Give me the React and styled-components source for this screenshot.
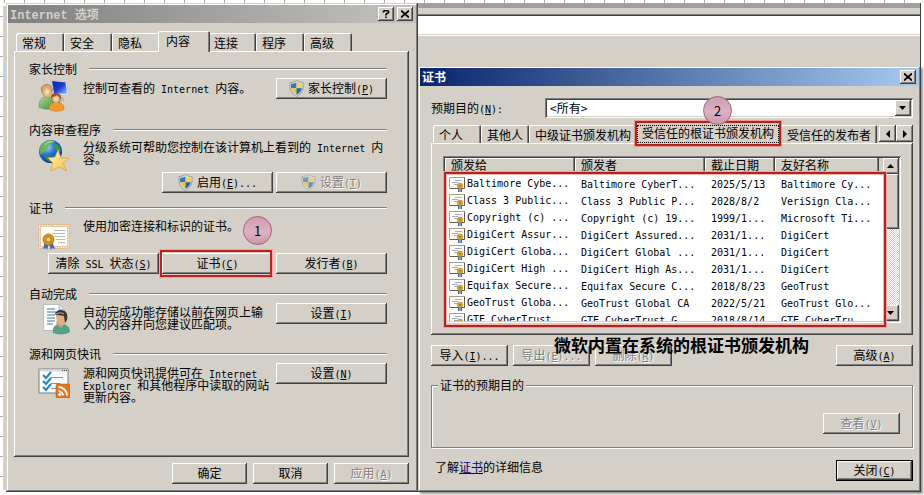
import React from 'react';
import styled, { createGlobalStyle, css } from 'styled-components';

const face = '#d4d0c8';
const shade = '#808080';
const dark = '#404040';
const red = '#b8201c';

const GlobalStyle = createGlobalStyle`
  *, *::before, *::after { box-sizing: border-box; }
  body {
    margin: 0;
    background: #fff;
    color: #000;
    font: 12px/12px "Noto Sans CJK SC", sans-serif;
  }
  button, select { font: inherit; color: inherit; }
  p, h1, h2 { margin: 0; font-size: 12px; font-weight: 400; }
`;

const raised = css`
  background: ${face};
  box-shadow: inset -1px -1px ${dark}, inset 1px 1px #fff, inset -2px -2px ${shade};
`;

const Mono = styled.span`
  font-family: "DejaVu Sans Mono", monospace;
  font-size: 10px;
  line-height: 8px;
  white-space: pre-wrap;
`;

/* Latin runs use a half-width face; a letter in brackets is an access key. */
function Label({ children }) {
  return children.split(/([\x20-\x7e]+)/).filter(Boolean).map((run, i) => {
    if (!/^[\x20-\x7e]/.test(run)) return run;
    const key = run.match(/^(.*\()([A-Z])(\).*)$/);
    return <Mono key={i}>{key ? <>{key[1]}<u>{key[2]}</u>{key[3]}</> : run}</Mono>;
  });
}

const Desktop = styled.main`
  display: grid;
  grid-template-columns: 412fr 503fr;
  padding: 3px 3px 3px 6px;
  background:
    linear-gradient(#bcd4ea, #bcd4ea) 3px 66px / 3px 18px no-repeat,
    linear-gradient(${face}, ${face}) 3px 6px / 3px 484px no-repeat,
    repeating-linear-gradient(90deg, transparent 0 4px, #aaa 4px 5px, transparent 5px 20px) 0 0 / 100% 3px no-repeat,
    repeating-linear-gradient(transparent 0 16px, #aaa 16px 17px, transparent 17px 20px) 0 0 / 3px 100% no-repeat,
    #fff;
`;

const Dialog = styled.section`
  display: flex;
  flex-direction: column;
  flex: 1;
  min-width: 0;
  padding: 2px;
  background: ${face};
  box-shadow: inset -1px -1px ${dark}, inset 1px 1px ${face}, inset -2px -2px ${shade}, inset 2px 2px #fff;
`;

const FrontDialog = styled(Dialog)`
  box-shadow: inset -1px -1px ${dark}, inset 1px 1px ${face}, inset -2px -2px ${shade}, inset 2px 2px #fff, 2px 2px 2px #999;
`;

const TitleBar = styled.header`
  display: flex;
  align-items: center;
  gap: 3px;
  height: 18px;
  padding: 0 3px 0 2px;
  color: ${p => (p.$active ? '#fff' : face)};
  background: ${p => (p.$active
    ? 'linear-gradient(90deg, #0a246a, #a6caf0)'
    : 'linear-gradient(90deg, #808080, #c4c2be)')};
  h1 { flex: 1; font-weight: 700; font-size: 12px; }
  h1 ${Mono} { font-family: "Liberation Mono", monospace; font-size: 12px; }
`;

const CaptionButton = styled.button`
  ${raised}
  display: grid;
  place-items: center;
  width: 16px;
  height: 14px;
  padding: 0;
  border: 0;
  svg { width: 8px; height: 8px; }
`;

const Tabs = styled.nav`
  display: flex;
  align-items: flex-end;
  height: 20px;
  padding-left: 2px;
  overflow: visible;
`;

const Tab = styled.button`
  height: ${p => (p.$active ? 21 : 18)}px;
  min-width: ${p => (p.$active ? 52 : 48)}px;
  margin: ${p => (p.$active ? '0 -2px -1px -2px' : '0')};
  padding: ${p => (p.$active ? '0 8px 2px' : '2px 6px 0')};
  text-align: left;
  white-space: nowrap;
  border: 0;
  border-radius: 2px 2px 0 0;
  background: ${face};
  box-shadow: inset 1px 1px #fff, inset -1px 0 ${dark}, inset -2px 0 ${shade};
  position: relative;
  z-index: ${p => (p.$active ? 1 : 0)};
  ${p => p.$marked && css`
    padding: 0 7px 2px;
    box-shadow: none;
    height: 22px;
    margin-right: 0;
    margin-bottom: -2px;
    outline: 1px dotted #000;
    outline-offset: -3px;
    &::after {
      content: '';
      position: absolute;
      inset: -2px 0 -1px;
      border: 2px solid ${red};
      box-shadow: 0 0 0 1px #e89a94;
    }
  `}
`;

const Panel = styled.div`
  padding: ${p => p.$pad};
  background: ${face};
  box-shadow: inset -1px -1px ${dark}, inset 1px 1px #fff, inset -2px -2px ${shade};
`;

const PushButton = styled.button`
  ${raised}
  display: inline-flex;
  align-items: center;
  justify-content: center;
  gap: 4px;
  flex: none;
  width: ${p => p.$w || 111}px;
  height: 21px;
  padding: 0 0 1px;
  border: 0;
  white-space: nowrap;
  position: relative;
  ${p => p.$default && css`
    border: 1px solid #000;
  `}
  &:disabled { color: ${shade}; text-shadow: 1px 1px #fff; }
  &:disabled svg { opacity: 0.6; }
  ${p => p.$marked && css`
    &::after {
      content: '';
      position: absolute;
      inset: -3px 1px -3px -2px;
      border: 2px solid #cc1a1a;
      box-shadow: 0 0 0 1px #eba8a0;
    }
  `}
`;

const InternetBody = styled.div`
  display: flex;
  flex-direction: column;
  flex: 1;
  padding: 8px 7px 6px 6px;
`;

const Section = styled.section`
  min-height: ${p => p.$h}px;
`;

const SectionTitle = styled.h2`
  display: flex;
  align-items: center;
  gap: 12px;
  height: 17px;
  padding-bottom: 2px;
  &::after {
    content: '';
    flex: 1;
    height: 2px;
    background: linear-gradient(${shade} 50%, #fff 50%);
  }
`;

const SectionBody = styled.div`
  display: grid;
  grid-template-columns: 32px ${p => (p.$wide ? '1fr' : '1fr 111px')};
  column-gap: 13px;
  padding-left: 9px;
  svg { display: block; }
`;

const Description = styled.p`
  padding-top: ${p => p.$top}px;
  margin-right: -10px;
`;

const ButtonRow = styled.div`
  display: flex;
  justify-content: flex-end;
  gap: ${p => p.$gap || 3}px;
  margin-top: ${p => p.$top}px;
`;

const RightSide = styled.div`
  display: flex;
  flex-direction: column;
  min-width: 0;
`;

const BackWindow = styled.div`
  height: 63px;
  background: linear-gradient(
    #a0a0a0 0 5px, ${face} 5px 11px, ${shade} 11px 12px, ${dark} 12px 13px,
    #fff 13px 31px, ${face} 31px 32px, #fff 32px 33px, ${face} 33px);
  border-right: 1px solid ${dark};
`;

const CertBody = styled.div`
  padding: 12px 6px 8px 11px;
`;

const PurposeRow = styled.div`
  display: grid;
  grid-template-columns: 114px 1fr;
  align-items: center;
`;

const SelectBox = styled.div`
  display: flex;
  height: 20px;
  padding: 2px;
  background: #fff;
  box-shadow: inset 1px 1px ${shade}, inset -1px -1px #fff, inset 2px 2px ${dark}, inset -2px -2px ${face};
  position: relative;
  select {
    flex: 1;
    appearance: none;
    border: 0;
    padding: 0 18px 0 3px;
    background: transparent;
    outline: 0;
  }
`;

const SelectArrow = styled.span`
  ${raised}
  position: absolute;
  right: 2px;
  top: 2px;
  display: grid;
  place-items: center;
  width: 16px;
  height: 16px;
  pointer-events: none;
`;

const CertTabs = styled.div`
  display: flex;
  justify-content: space-between;
  margin-top: 5px;
`;

const TabScroller = styled.div`
  display: flex;
  padding-top: 2px;
`;

const ArrowButton = styled.button`
  ${raised}
  display: grid;
  place-items: center;
  width: ${p => p.$w || 16}px;
  height: ${p => p.$h || 16}px;
  padding: 0;
  border: 0;
`;

const ListBox = styled.div`
  display: grid;
  grid-template-columns: 1fr 16px;
  height: 167px;
  padding: 2px;
  background: #fff;
  box-shadow: inset 1px 1px ${shade}, inset -1px -1px #fff, inset 2px 2px ${dark}, inset -2px -2px ${face};
  position: relative;
  &::after {
    content: '';
    position: absolute;
    inset: 16px 15px -4px 1px;
    border: 2px solid ${red};
    box-shadow: 0 0 0 1px #e6aaa4, inset 0 0 0 1px #f0b8b2;
    pointer-events: none;
  }
`;

const TableClip = styled.div`
  overflow: hidden;
  background: linear-gradient(${face} 16px, #fff 16px);
`;

const CertTable = styled.table`
  width: 434px;
  table-layout: fixed;
  border-collapse: collapse;
  th {
    height: 17px;
    padding: 0 6px 3px;
    text-align: left;
    font-weight: 400;
    background: ${face};
    box-shadow: inset -1px 0 ${dark}, inset -2px 0 ${shade}, inset 1px 1px #fff;
  }
  td {
    height: 17px;
    padding: 0 6px 1px;
    white-space: nowrap;
  }
  td:first-child { padding: 0 0 0 4px; }
`;

const Issued = styled.div`
  display: flex;
  align-items: center;
  gap: 2px;
`;

const ScrollBar = styled.div`
  display: flex;
  flex-direction: column;
  background: repeating-conic-gradient(#fff 0 25%, ${face} 0 50%) 0 0 / 2px 2px;
`;

const Thumb = styled.div`
  ${raised}
  height: 55px;
  margin-bottom: auto;
`;

const CertActions = styled.div`
  display: flex;
  gap: 5px;
  margin-top: 10px;
  position: relative;
  > button:last-of-type { margin-left: auto; }
`;

const Caption = styled.strong`
  position: absolute;
  left: 123px;
  top: -10px;
  font-size: 17px;
  line-height: 20px;
  white-space: nowrap;
`;

const PurposeGroup = styled.fieldset`
  display: flex;
  justify-content: flex-end;
  margin: 13px 0 0;
  padding: 22px 12px 13px;
  border: 1px solid ${shade};
  box-shadow: inset 1px 1px #fff, 1px 1px #fff;
  legend {
    margin-left: -6px;
    padding: 0 2px;
    background: ${face};
  }
`;

const CertFooter = styled.footer`
  display: flex;
  justify-content: space-between;
  margin-top: 12px;
  padding-left: 4px;
  p { padding-top: 1px; }
  a { color: #00007f; }
`;

const Badge = styled.span`
  position: absolute;
  left: ${p => p.$x}px;
  top: ${p => p.$y}px;
  z-index: 3;
  display: grid;
  place-items: center;
  width: 29px;
  height: 29px;
  border: 1px solid #9c6478;
  border-radius: 50%;
  background: linear-gradient(#cf9cb0, #dcb2c2 55%, #cb98aa);
  font: 13px/13px "Noto Sans CJK SC", sans-serif;
`;

const Anchor = styled.div`
  position: relative;
`;

const Arrow = ({ dir }) => {
  const d = { up: 'M0 6h7L3.500 2z', down: 'M0 2h7L3.500 6z', left: 'M6 0v8L2 4z', right: 'M2 0v8l4-4z' }[dir];
  return <svg width="8" height="8" viewBox="0 0 8 8" aria-hidden="true"><path d={d} /></svg>;
};

const Cross = () => (
  <svg viewBox="0 0 8 8" aria-hidden="true"><path d="M0 .5l8 7M8 .5l-8 7" stroke="#000" strokeWidth="1.700" /></svg>
);

const Question = () => (
  <svg viewBox="0 0 8 8" aria-hidden="true">
    <path d="M1.500 2.500V1.500L2.500.7h3l1 .8v1L4 4.300v1.200M4 6.600V8" fill="none" stroke="#000" strokeWidth="1.600" />
  </svg>
);

const Shield = () => (
  <svg width="15" height="17" viewBox="0 0 15 17" aria-hidden="true">
    <path d="M7.500.5c2 1.500 4 2 6.500 2 .6 6-.8 11-6.500 14C1.800 13.500.4 8.500 1 2.500c2.500 0 4.500-.5 6.500-2z" fill="#dde3e6" stroke="#8f9aa0" />
    <path d="M7.500 2.200v6H2.200c-.3-1.500-.3-3-.1-4.500 2 0 3.700-.5 5.400-1.500z" fill="#2f78bd" />
    <path d="M7.500 2.200c1.700 1 3.400 1.500 5.400 1.500.2 1.500.2 3-.1 4.500H7.500z" fill="#f1d44b" />
    <path d="M7.500 8.200v6.700C4.500 13.300 2.800 11 2.200 8.200z" fill="#efc938" />
    <path d="M7.500 8.200h5.300c-.6 2.800-2.300 5.100-5.300 6.700z" fill="#2566ac" />
  </svg>
);

const FamilyIcon = () => (
  <svg width="32" height="34" viewBox="0 0 32 34" aria-hidden="true">
    <defs>
      <linearGradient id="screen" x2="1" y2="1"><stop stopColor="#0826b0" /><stop offset=".5" stopColor="#1736d4" /><stop offset="1" stopColor="#9cc4ff" /></linearGradient>
      <linearGradient id="green" x2="1" y2="1"><stop stopColor="#a8d890" /><stop offset="1" stopColor="#3c8b3c" /></linearGradient>
      <radialGradient id="skin"><stop stopColor="#ffe8c4" /><stop offset="1" stopColor="#d9a066" /></radialGradient>
    </defs>
    <path d="M13 2l16 2 2 14-16-1z" fill="#dfe2e6" stroke="#a9adb2" strokeWidth=".5" />
    <path d="M14 3l13.500 1.500L29 16l-13-1z" fill="url(#screen)" />
    <path d="M20 18l6 1v4l-6 1z" fill="#b8bcc0" />
    <path d="M1 29c0-7 2-10 8-10s9 4 9 10c-4 3-13 3-17 0z" fill="url(#green)" stroke="#4d8a45" strokeWidth=".5" />
    <path d="M3 13c-1-5 3-7 6-7s7 3 5 9l-3 4H6z" fill="#b98d4c" />
    <ellipse cx="9" cy="14" rx="4.500" ry="5.500" fill="url(#skin)" />
    <path d="M4 12c2-1 3-2 4-3 2 2 4 2 6 2-1-4-9-6-10 1z" fill="#d3ac6b" />
    <path d="M11 31c0-5 2-7 7-7s8 2 8 7c-3 3-12 3-15 0z" fill="#f0982c" stroke="#bd701b" strokeWidth=".5" />
    <path d="M13 19c0-5 10-6 10 1l-2 5h-6z" fill="#8a4e22" />
    <ellipse cx="18" cy="21" rx="4" ry="4.300" fill="url(#skin)" />
    <path d="M14 19c2 0 4-1 5-2 1 1 2 2 4 2-1-5-8-5-9 0z" fill="#9c5b2a" />
  </svg>
);

const GlobeIcon = () => (
  <svg width="32" height="33" viewBox="0 0 32 33" aria-hidden="true">
    <defs>
      <radialGradient id="sea" cx=".35" cy=".3" r=".8"><stop stopColor="#a9dcff" /><stop offset=".4" stopColor="#2a78d0" /><stop offset="1" stopColor="#082a72" /></radialGradient>
      <linearGradient id="gold" x2="1" y2="1"><stop stopColor="#fff7b8" /><stop offset="1" stopColor="#f6bd4a" /></linearGradient>
    </defs>
    <circle cx="12.500" cy="12.500" r="11.500" fill="url(#sea)" />
    <path d="M4 5c3-3 6-4 9-4l2 3-4 2-1 4-4 3-3 3C1 13 1 9 4 5z" fill="#67b84e" opacity=".85" />
    <path d="M17 4c4 2 6 5 6 9l-4-1-3-4zM7 17l6 1 1 5c-3 0-6-2-7-6z" fill="#3f9c3a" opacity=".85" />
    <path d="M7 6c2-3 6-4 9-3" stroke="#fff" fill="none" opacity=".6" />
    <path d="M20 11l3 8 8 0-6 5 4 8-8-4-8 4 2-8-5-5 7-1z" fill="url(#gold)" stroke="#d9a441" strokeWidth=".8" strokeLinejoin="round" />
  </svg>
);

const CertificateIcon = () => (
  <svg width="32" height="27" viewBox="0 0 32 27" aria-hidden="true">
    <path d="M1.500 1.500h29v22h-29z" fill="#fffdf6" stroke="#dfb98c" strokeWidth="2.500" />
    <path d="M1.500 1.500h29v22h-29z" fill="none" stroke="#fff3dc" strokeWidth="1" strokeDasharray="1.500 1" />
    <path d="M16 6.500h11M14 9.500h13M17 12.500h10M18 15.500h9M20 18.500h7" stroke="#b6bac2" />
    <path d="M7 17l-2 8 3-1 1 2 2-6 2 6 1-2 3 1-3-8z" fill="#3c6ec4" />
    <circle cx="10.500" cy="15.500" r="5.500" fill="#d89a1c" stroke="#a36a08" strokeWidth=".8" />
    <circle cx="10.500" cy="15.500" r="2.700" fill="#f7d56a" stroke="#8f5c05" strokeWidth=".8" />
  </svg>
);

const AutoCompleteIcon = () => (
  <svg width="32" height="32" viewBox="0 0 32 32" aria-hidden="true">
    <path d="M5.500 1.500h16l5 5v21h-21z" fill="#fdfdfd" stroke="#b5bbc0" />
    <path d="M21 1.500v5h5.500" fill="#dce4ea" stroke="#b5bbc0" />
    <path d="M9 6h8M9 9h9M9 12h8M9 15h8M9 18h8M9 21h6" stroke="#3e78b5" strokeWidth="1.200" />
    <path d="M15 30c-1-6 2-9 8-9s9 3 9 8c-4 3-12 3-17 1z" fill="#55a184" />
    <path d="M18 21l5 4 3-4-1-4h-6z" fill="#d8a274" />
    <path d="M18 12c0-4 9-5 10 1 1 5-1 9-4 9s-6-4-6-10z" fill="#e0b083" />
    <path d="M17 12c0-6 10-7 12-1 1 4 0 7-2 9l-1-7c-3-1-6-1-9-1z" fill="#3c332e" />
    <path d="M17 12c2-2 6-3 9-1" stroke="#b3b9bc" fill="none" />
  </svg>
);

const FeedsIcon = () => (
  <svg width="32" height="31" viewBox="0 0 32 31" aria-hidden="true">
    <path d="M1 2h29v24H1z" fill="#fbfcfd" stroke="#777d84" />
    <path d="M1.500 2.500h28v2h-28z" fill="#d6dade" />
    <path d="M24 3.500h1M26 3.500h1M28 3.500h1" stroke="#444" />
    <path d="M13 10.500h12M13 16.500h9M13 21.500h5" stroke="#8a9097" />
    <path d="M5 8l3 3 5-6M5 14l3 3 5-6M5 20l3 3 5-6" fill="none" stroke="#2383c4" strokeWidth="2" />
    <rect x="18" y="17" width="14" height="14" rx="2" fill="#e8741a" stroke="#b9530a" strokeWidth=".6" />
    <path d="M20.500 20a8.500 8.500 0 0 1 8.500 8.500M20.500 24a4.500 4.500 0 0 1 4.500 4.500" fill="none" stroke="#fff" strokeWidth="1.800" />
    <circle cx="21.700" cy="27.600" r="1.500" fill="#fff" />
  </svg>
);

const RowIcon = () => (
  <svg width="16" height="16" viewBox="0 0 16 16" aria-hidden="true">
    <path d="M.5 1.500h15v11H.5z" fill="#fffefa" stroke="#a89e8c" />
    <path d="M15.500 1.500v11H1" fill="none" stroke="#665d4c" />
    <path d="M6 4.500h7M3 6.500h6M5 8.500h4" stroke="#a4abc4" />
    <path d="M9 11h1.600v5H9zM11.400 11H13v5h-1.600z" fill="#3d68a8" />
    <circle cx="11" cy="9.800" r="2.800" fill="#dba52c" stroke="#b5882c" strokeWidth=".6" />
    <circle cx="11" cy="9.800" r=".8" fill="#80550c" />
  </svg>
);

const certificates = [
  ['Baltimore Cybe...', 'Baltimore CyberT...', '2025/5/13', 'Baltimore Cy...'],
  ['Class 3 Public...', 'Class 3 Public P...', '2028/8/2', 'VeriSign Cla...'],
  ['Copyright (c) ...', 'Copyright (c) 19...', '1999/1...', 'Microsoft Ti...'],
  ['DigiCert Assur...', 'DigiCert Assured...', '2031/1...', 'DigiCert'],
  ['DigiCert Globa...', 'DigiCert Global ...', '2031/1...', 'DigiCert'],
  ['DigiCert High ...', 'DigiCert High As...', '2031/1...', 'DigiCert'],
  ['Equifax Secure...', 'Equifax Secure C...', '2018/8/23', 'GeoTrust'],
  ['GeoTrust Globa...', 'GeoTrust Global CA', '2022/5/21', 'GeoTrust Glo...'],
  ['GTE CyberTrust', 'GTE CyberTrust G', '2018/8/14', 'GTE CyberTru'],
];

function InternetOptions() {
  return (
    <Dialog aria-label="Internet 选项">
      <TitleBar>
        <h1><Label>Internet 选项</Label></h1>
        <CaptionButton aria-label="帮助"><Question /></CaptionButton>
        <CaptionButton aria-label="关闭"><Cross /></CaptionButton>
      </TitleBar>
      <InternetBody>
        <Tabs>
          {['常规', '安全', '隐私', '内容', '连接', '程序', '高级'].map(name => (
            <Tab key={name} $active={name === '内容'}>{name}</Tab>
          ))}
        </Tabs>
        <Panel $pad="10px 22px 0 15px">
          <Section $h={61}>
            <SectionTitle>家长控制</SectionTitle>
            <SectionBody>
              <FamilyIcon />
              <Description $top={4}><Label>控制可查看的 Internet 内容。</Label></Description>
              <PushButton><Shield /><span><Label>家长控制(P)</Label></span></PushButton>
            </SectionBody>
          </Section>
          <Section $h={78}>
            <SectionTitle>内容审查程序</SectionTitle>
            <SectionBody $wide>
              <GlobeIcon />
              <Description $top={2}><Label>分级系统可帮助您控制在该计算机上看到的 Internet 内容。</Label></Description>
            </SectionBody>
            <ButtonRow $top={0}>
              <PushButton><Shield /><span><Label>启用(E)...</Label></span></PushButton>
              <PushButton disabled><Shield /><span><Label>设置(T)</Label></span></PushButton>
            </ButtonRow>
          </Section>
          <Section $h={86}>
            <SectionTitle>证书</SectionTitle>
            <Anchor>
              <Badge $x={214} $y={-1}>1</Badge>
              <SectionBody $wide>
                <Description as="div" $top={7}><CertificateIcon /></Description>
                <Description $top={3}>使用加密连接和标识的证书。</Description>
              </SectionBody>
            </Anchor>
            <ButtonRow $top={2}>
              <PushButton><span><Label>清除 SSL 状态(S)</Label></span></PushButton>
              <PushButton $marked><span><Label>证书(C)</Label></span></PushButton>
              <PushButton><span><Label>发行者(B)</Label></span></PushButton>
            </ButtonRow>
          </Section>
          <Section $h={60}>
            <SectionTitle>自动完成</SectionTitle>
            <SectionBody>
              <AutoCompleteIcon />
              <Description $top={3}>自动完成功能存储以前在网页上输入的内容并向您建议匹配项。</Description>
              <PushButton><span><Label>设置(I)</Label></span></PushButton>
            </SectionBody>
          </Section>
          <Section $h={111}>
            <SectionTitle>源和网页快讯</SectionTitle>
            <SectionBody>
              <Description as="div" $top={4}><FeedsIcon /></Description>
              <Description $top={4}><Label>源和网页快讯提供可在 Internet Explorer 和其他程序中读取的网站更新内容。</Label></Description>
              <PushButton><span><Label>设置(N)</Label></span></PushButton>
            </SectionBody>
          </Section>
        </Panel>
        <ButtonRow $top={6} $gap={6}>
          <PushButton $w={75}>确定</PushButton>
          <PushButton $w={75}>取消</PushButton>
          <PushButton $w={75} disabled><span><Label>应用(A)</Label></span></PushButton>
        </ButtonRow>
      </InternetBody>
    </Dialog>
  );
}

function Certificates() {
  return (
    <FrontDialog aria-label="证书">
      <TitleBar $active>
        <h1>证书</h1>
        <CaptionButton aria-label="关闭"><Cross /></CaptionButton>
      </TitleBar>
      <CertBody>
        <PurposeRow>
          <label htmlFor="purpose"><Label>预期目的(N):</Label></label>
          <SelectBox>
            <select id="purpose"><option>&lt;所有&gt;</option></select>
            <SelectArrow><Arrow dir="down" /></SelectArrow>
            <Badge $x={158} $y={-2}>2</Badge>
          </SelectBox>
        </PurposeRow>
        <CertTabs>
          <Tabs>
            <Tab>个人</Tab>
            <Tab>其他人</Tab>
            <Tab>中级证书颁发机构</Tab>
            <Tab $active $marked>受信任的根证书颁发机构</Tab>
            <Tab>受信任的发布者</Tab>
          </Tabs>
          <TabScroller>
            <ArrowButton $w={17} $h={17} aria-label="向左"><Arrow dir="left" /></ArrowButton>
            <ArrowButton $w={17} $h={17} aria-label="向右"><Arrow dir="right" /></ArrowButton>
          </TabScroller>
        </CertTabs>
        <Panel $pad="13px 12px 12px">
          <ListBox>
            <TableClip>
              <CertTable>
                <colgroup><col width="130" /><col width="130" /><col width="70" /><col width="104" /></colgroup>
                <thead>
                  <tr><th>颁发给</th><th>颁发者</th><th>截止日期</th><th>友好名称</th></tr>
                </thead>
                <tbody>
                  {certificates.map(([to, by, expires, name]) => (
                    <tr key={to}>
                      <td><Issued><RowIcon /><Mono>{to}</Mono></Issued></td>
                      <td><Mono>{by}</Mono></td>
                      <td><Mono>{expires}</Mono></td>
                      <td><Mono>{name}</Mono></td>
                    </tr>
                  ))}
                </tbody>
              </CertTable>
            </TableClip>
            <ScrollBar>
              <ArrowButton aria-label="向上滚动"><Arrow dir="up" /></ArrowButton>
              <Thumb />
              <ArrowButton aria-label="向下滚动"><Arrow dir="down" /></ArrowButton>
            </ScrollBar>
          </ListBox>
        </Panel>
        <CertActions>
          <PushButton $w={77}><span><Label>导入(I)...</Label></span></PushButton>
          <PushButton $w={77} disabled><span><Label>导出(E)...</Label></span></PushButton>
          <PushButton $w={77} disabled><span><Label>删除(R)</Label></span></PushButton>
          <PushButton $w={77}><span><Label>高级(A)</Label></span></PushButton>
          <Caption>微软内置在系统的根证书颁发机构</Caption>
        </CertActions>
        <PurposeGroup>
          <legend>证书的预期目的</legend>
          <PushButton $w={77} disabled><span><Label>查看(V)</Label></span></PushButton>
        </PurposeGroup>
        <CertFooter>
          <p>了解<a href="#certificates">证书</a>的详细信息</p>
          <PushButton $w={77} $default><span><Label>关闭(C)</Label></span></PushButton>
        </CertFooter>
      </CertBody>
    </FrontDialog>
  );
}

export default function App() {
  return (
    <>
      <GlobalStyle />
      <Desktop>
        <InternetOptions />
        <RightSide>
          <BackWindow />
          <Certificates />
        </RightSide>
      </Desktop>
    </>
  );
}
